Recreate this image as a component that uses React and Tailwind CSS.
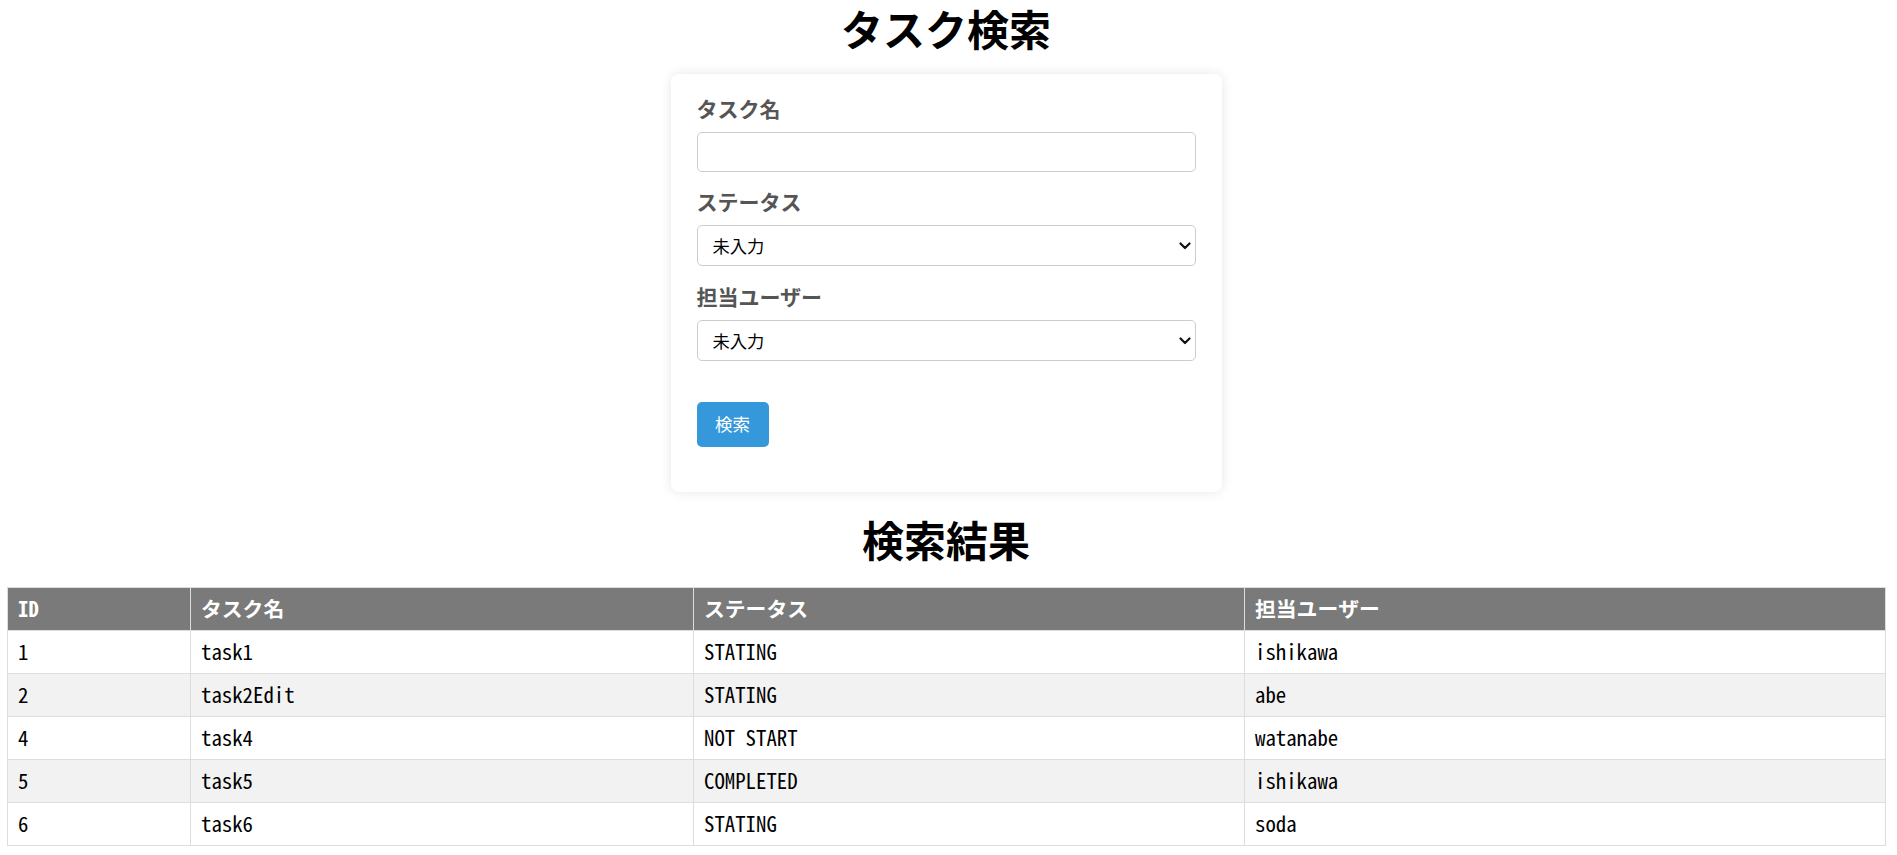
import React from 'react';

const rows = [
  { id: 1, name: 'task1', status: 'STATING', user: 'ishikawa' },
  { id: 2, name: 'task2Edit', status: 'STATING', user: 'abe' },
  { id: 4, name: 'task4', status: 'NOT START', user: 'watanabe' },
  { id: 5, name: 'task5', status: 'COMPLETED', user: 'ishikawa' },
  { id: 6, name: 'task6', status: 'STATING', user: 'soda' },
];

const Chevron = () => (
  <svg
    className="pointer-events-none absolute right-[5px] top-1/2 -translate-y-1/2"
    width="12"
    height="8"
    viewBox="0 0 12 8"
    fill="none"
  >
    <path d="M1.5 1.5 6 6l4.5-4.5" stroke="#111" strokeWidth="2.2" strokeLinecap="round" strokeLinejoin="round" />
  </svg>
);

const SelectBox = () => (
  <div className="relative">
    <select className="h-[41px] w-full appearance-none rounded-[5px] border border-[#ccc] bg-white pl-[15px] text-[17.3px] text-black outline-none">
      <option>未入力</option>
    </select>
    <Chevron />
  </div>
);

export default function App() {
  return (
    <div className="w-[1892px] bg-white pb-[10px] font-['Noto_Sans_CJK_JP','Noto_Sans',sans-serif]">
      {/* 検索フォーム */}
      <h1 className="m-0 text-center text-[42px] font-bold leading-[56px] text-black">タスク検索</h1>

      <div className="mx-auto mt-[18px] w-[551px] rounded-[8px] bg-white px-[26px] pt-[22px] pb-[45px] shadow-[0_0_12px_rgba(0,0,0,0.1)]">
        <label className="mb-[12px] block text-[21px] font-bold leading-[24px] text-[#555]">タスク名</label>
        <input type="text" className="block h-[40px] w-full rounded-[5px] border border-[#ccc] bg-white px-[12px] outline-none" />

        <label className="mt-[17px] mb-[12px] block text-[21px] font-bold leading-[24px] text-[#555]">ステータス</label>
        <SelectBox />

        <label className="mt-[18px] mb-[12px] block text-[21px] font-bold leading-[24px] text-[#555]">担当ユーザー</label>
        <SelectBox />

        <button className="mt-[41px] flex h-[45px] w-[72px] items-center justify-center rounded-[5px] bg-[#3498db] text-[17.5px] text-white">
          検索
        </button>
      </div>

      {/* 結果 */}
      <h2 className="mt-[21px] text-center text-[42px] font-bold leading-[52px] text-black">検索結果</h2>

      <div className="mt-[22px] px-[7px]">
        <table className="w-[1878px] table-fixed border-collapse border border-[#ddd] font-['Noto_Sans_Mono_CJK_JP','DejaVu_Sans_Mono',monospace] text-[20.8px] text-black">
          <colgroup>
            <col className="w-[183px]" />
            <col className="w-[503px]" />
            <col className="w-[551px]" />
            <col className="w-[641px]" />
          </colgroup>
          <thead>
            <tr className="bg-[#7a7a7a] text-white">
              <th className="h-[43px] border border-[#ddd] px-[10px] text-left font-bold">ID</th>
              <th className="h-[43px] border border-[#ddd] px-[10px] text-left font-bold">タスク名</th>
              <th className="h-[43px] border border-[#ddd] px-[10px] text-left font-bold">ステータス</th>
              <th className="h-[43px] border border-[#ddd] px-[10px] text-left font-bold">担当ユーザー</th>
            </tr>
          </thead>
          <tbody>
            {rows.map((r, i) => (
              <tr key={r.id} className={i % 2 === 1 ? 'bg-[#f2f2f2]' : 'bg-white'}>
                <td className="h-[43px] border border-[#ddd] px-[10px]">{r.id}</td>
                <td className="h-[43px] border border-[#ddd] px-[10px]">{r.name}</td>
                <td className="h-[43px] border border-[#ddd] px-[10px]">{r.status}</td>
                <td className="h-[43px] border border-[#ddd] px-[10px]">{r.user}</td>
              </tr>
            ))}
          </tbody>
        </table>
      </div>
    </div>
  );
}
